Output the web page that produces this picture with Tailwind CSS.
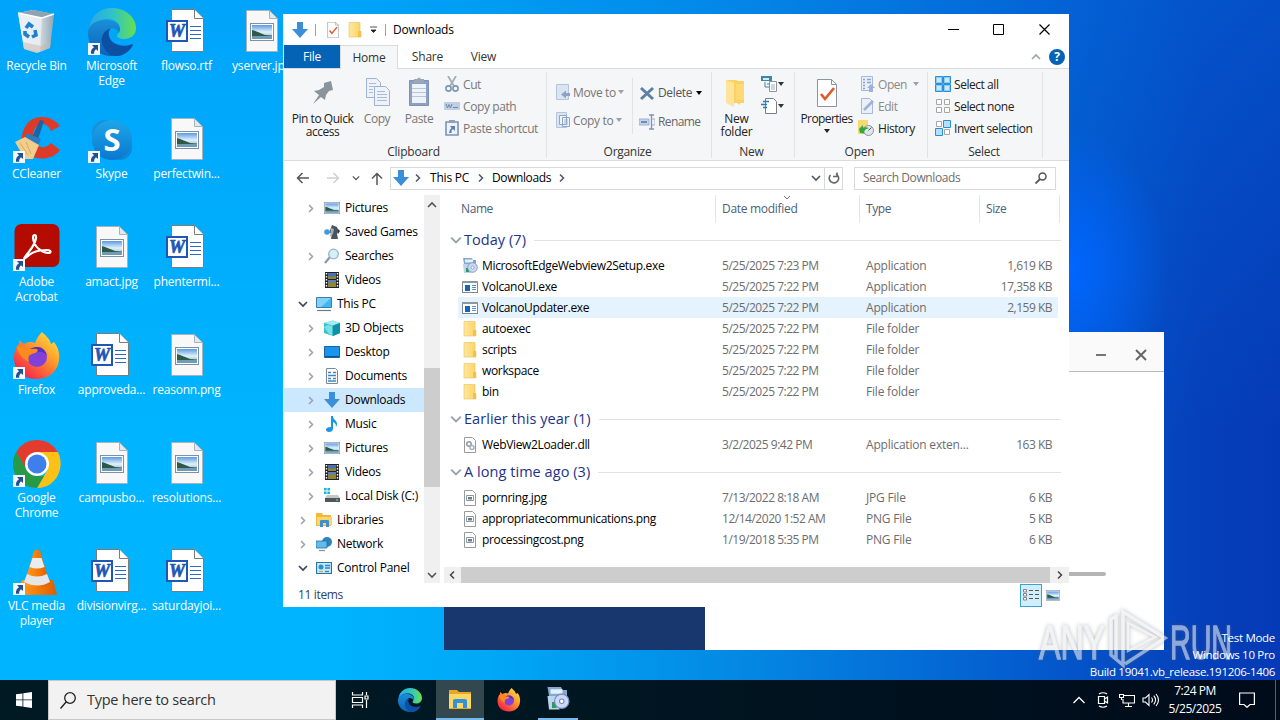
<!DOCTYPE html>
<html lang="en">

<head>
  <meta charset="UTF-8" />
  <meta name="viewport" content="width=device-width, initial-scale=1.0" />
  <title>Downloads</title>
  <script src="https://cdn.jsdelivr.net/npm/@tailwindcss/browser@4"></script>
</head>

<body class="relative w-[1280px] h-[720px] overflow-hidden bg-[#00b0ff] font-['Open_Sans','Noto_Sans',sans-serif] text-xs tracking-[-0.2px] text-black">

  <!-- Icon sprites -->
  <svg class="absolute w-0 h-0">
    <defs>
      <linearGradient id="gEdgeA" x1="0" y1="0" x2="1" y2="0"><stop offset="0" stop-color="#2aa7e8" /><stop offset=".5" stop-color="#2fc3c8" /><stop offset="1" stop-color="#66e04e" /></linearGradient>
      <linearGradient id="gEdgeB" x1="0" y1="0" x2="0" y2="1"><stop offset="0" stop-color="#1a8fd8" /><stop offset="1" stop-color="#0b62b8" /></linearGradient>
      <linearGradient id="gFox" x1="1" y1="0" x2="0.2" y2="1"><stop offset="0" stop-color="#fff04a" /><stop offset=".45" stop-color="#ff9a2a" /><stop offset="1" stop-color="#f5184f" /></linearGradient>
      <linearGradient id="gSkype" x1="0" y1="0" x2="0" y2="1"><stop offset="0" stop-color="#1ca6e8" /><stop offset="1" stop-color="#0a78d0" /></linearGradient>
      <linearGradient id="gCone" x1="0" y1="0" x2="1" y2="0"><stop offset="0" stop-color="#ffa22e" /><stop offset=".5" stop-color="#f57c0a" /><stop offset="1" stop-color="#d85f00" /></linearGradient>
      <linearGradient id="gPhoto" x1="0" y1="0" x2="0" y2="1"><stop offset="0" stop-color="#5b9be0" /><stop offset=".5" stop-color="#dff0fa" /><stop offset="1" stop-color="#7fb0cf" /></linearGradient>
      <linearGradient id="gBin" x1="0" y1="0" x2="1" y2="0"><stop offset="0" stop-color="#e4eef4" /><stop offset=".6" stop-color="#cfdbe3" /><stop offset="1" stop-color="#93a6b4" /></linearGradient>
      <linearGradient id="gFold" x1="0" y1="0" x2="1" y2="0"><stop offset="0" stop-color="#ffe79b" /><stop offset="1" stop-color="#fcd266" /></linearGradient>
    </defs>

    <symbol id="photo" viewBox="0 0 24 18">
      <rect x=".5" y=".5" width="23" height="17" fill="#fff" stroke="#7d8fa5" />
      <rect x="2" y="2" width="20" height="14" fill="url(#gPhoto)" />
      <path d="M2 7c4 1 8 3 13 5l7 .5V14H2z" fill="#2e5a45" />
      <path d="M2 13h20v3H2z" fill="#6d9bb8" />
    </symbol>
    <symbol id="image" viewBox="0 0 48 48">
      <path d="M8.500 2.500h23l8 8v33h-31z" fill="#f8f8f8" stroke="#a5b3bd" />
      <path d="M31.500 2.500v8h8z" fill="#e3e8ec" stroke="#a5b3bd" />
      <use href="#photo" x="12" y="15" width="24" height="18" />
    </symbol>
    <symbol id="word" viewBox="0 0 48 48">
      <path d="M8.500 1.500h23l9 9v33h-32z" fill="#fff" stroke="#7b7b7b" />
      <path d="M31.500 1.500v9h9" fill="#fff" stroke="#7b7b7b" />
      <path d="M27 18.500h11M27 22.500h11M27 26.500h11M27 30.500h11" stroke="#2b6cc4" stroke-width="1.200" />
      <rect x="4" y="13" width="20" height="20" fill="#fff" stroke="#1e57b5" stroke-width="2" />
      <text x="14" y="29" text-anchor="middle" font-family="Liberation Serif" font-weight="bold" font-style="italic" font-size="18" fill="#1e57b5" stroke="#1e57b5" stroke-width=".7">W</text>
    </symbol>
    <symbol id="shortcut" viewBox="0 0 12 12">
      <rect width="12" height="12" fill="#f4f7fb" />
      <path d="M4 2h6v6L8 6.300C6.500 7.500 6 9 6.200 10.800H3C2.600 8 3.600 6 6 4.300z" fill="#234f93" />
    </symbol>
    <symbol id="bin" viewBox="0 0 48 48">
      <path d="M5 5l15-3 21 4-4 34-13 5-13-4z" fill="url(#gBin)" />
      <path d="M5 5l15-3 21 4-12 4z" fill="#8fa3b1" />
      <path d="M5 5l24 5-2 34-16-4z" fill="#edf3f7" fill-opacity=".75" />
      <path d="M5 5l24 5 12-4" fill="none" stroke="#fff" stroke-width="1.400" />
      <path d="M10 34l18 4 10-5-1 7-13 5-13-4z" fill="#c8b7a8" fill-opacity=".5" />
      <g fill="none" stroke="#1f7fd2" stroke-width="3.600"><path d="M13 20l3-4 4 3" /><path d="M22 22l1 5-4 2" /><path d="M16 29l-4-3 0-3" /></g>
    </symbol>
    <symbol id="edge" viewBox="0 0 48 48">
      <path d="M1 22C2 8 12 0 24 0c14 0 24 10 24 20 0 7-5 11-12 11-4 0-7-2-7-3 0-2 3-3 3-8 0-5-6-9-13-9C10 11 3 16 1 22z" fill="url(#gEdgeA)" />
      <path d="M0 25c0-8 8-13 17-13 9 0 15 4 15 10l-1 3c-1-3-4-5-7-5-5 0-8 5-6 11 2 8 9 13 17 15-3 2-7 2-11 2C10 48 0 38 0 25z" fill="url(#gEdgeB)" />
      <path d="M21 21c-7 3-9 11-6 17 3 7 9 10 13 10 8 0 14-5 17-11 0-1-1-1-1-1-8 4-21 1-23-8-1-3 0-6 2-8z" fill="#0d4fa2" />
    </symbol>
    <symbol id="ccleaner" viewBox="0 0 48 48">
      <path d="M47 10C41 1 27-2 18 4 8 11 6 27 13 36c8 9 26 9 34-2l-9-7c-5 6-13 5-16 0-4-7-2-15 4-18 5-2 10 0 12 6z" fill="#dd3b27" />
      <path d="M27 4l4 1-6 18-6-2z" fill="#1f62a0" />
      <path d="M14 17l14 6-3 7-14-6z" fill="#2c7cc2" />
      <path d="M2 26l10-5 14 8-6 14-8 0z" fill="#f3cd8b" />
      <path d="M7 27l8 12M13 26l5 12" stroke="#d9a95c" fill="none" />
    </symbol>
    <symbol id="skype" viewBox="0 0 48 48">
      <circle cx="17" cy="17" r="13" fill="#1a8fdc" /><circle cx="32" cy="32" r="12" fill="#1088da" />
      <circle cx="24" cy="24" r="20" fill="url(#gSkype)" />
      <text x="24" y="35" text-anchor="middle" font-family="Open Sans" font-weight="bold" font-size="31" fill="#fff">S</text>
    </symbol>
    <symbol id="acrobat" viewBox="0 0 48 48">
      <rect x="1.500" y="0" width="45" height="43" rx="7" fill="#b30b00" />
      <path d="M12 33c4-6 10-11 11-19 .5-4-3-4-3 0 1 9 8 14 15 15 4 0 3-3-1-3-8 0-15 2-19 6-3 3-5 3-3 1z" fill="none" stroke="#fff" stroke-width="2.200" stroke-linejoin="round" />
    </symbol>
    <symbol id="firefox" viewBox="0 0 48 48">
      <path d="M29 0c4 4 8 7 9 12l3-2c4 5 6 11 5 18-1 11-10 19-22 19C11 47 1 39 1 26c0-6 2-11 5-14l0-4 5 4c5-3 9-2 11-1 2-5 4-8 7-11z" fill="url(#gFox)" />
      <circle cx="24" cy="25" r="10" fill="#8141d8" />
      <path d="M24 15c6 0 10 5 10 10 0-3-5-6-9-5-5 1-8-1-8-3 2-1 4-2 7-2z" fill="#5a2fc0" />
      <path d="M4 14c5 0 8 2 12 3 4 0 7-1 9 1-1 4-6 3-8 5-2 1-2 4-1 7-6-3-12-9-12-16z" fill="#ff8b1f" />
    </symbol>
    <symbol id="chrome" viewBox="0 0 48 48">
      <path d="M24 24L3.200 12A24 24 0 0 1 44.800 12z" fill="#e33b2e" />
      <path d="M24 12h20.800c5 9 4 24-8 32.500A24 24 0 0 1 24 48l10.500-18z" fill="#fbc116" />
      <path d="M13.500 30L3.200 12 24 12z" fill="#e33b2e" />
      <path d="M3.200 12l10.500 18L24 36l7 0-7 12A24 24 0 0 1 3.200 12z" fill="#269a45" />
      <circle cx="24" cy="24" r="12" fill="#fff" /><circle cx="24" cy="24" r="9.500" fill="#3f7fec" />
    </symbol>
    <symbol id="vlc" viewBox="0 0 48 48">
      <path d="M9 32h31l4 15H4z" fill="url(#gCone)" />
      <path d="M21 3q3-3 6 0l10 33q-12 9-26 0z" fill="url(#gCone)" />
      <path d="M19.500 10h9l3 9q-7.500 3-15 0z" fill="#ececec" /><path d="M14 26q10 5 20 0l3 8q-12 7-26 0z" fill="#e6e6e6" />
    </symbol>
    <symbol id="folder" viewBox="0 0 16 16">
      <path d="M2 1h11v12H2z" fill="url(#gFold)" /><path d="M2 .5h11v9h1V15H2z" fill="url(#gFold)" stroke="#e9c15a" stroke-width=".6" />
      <path d="M11 9v6h3V9z" fill="#f3c04c" />
    </symbol>
    <symbol id="explorer" viewBox="0 0 24 24">
      <path d="M1 3h8l2 2h12v17H1z" fill="#e8a724" /><path d="M1 7h22v14H1z" fill="#fdd663" />
      <path d="M5 21v-7q0-2 2-2h10q2 0 2 2v7h-4v-5H9v5z" fill="#2e92dd" />
    </symbol>
    <symbol id="down" viewBox="0 0 16 16"><path d="M5 0h6v7h5l-8 9-8-9h5z" fill="#3b8fd8" /></symbol>
    <symbol id="check" viewBox="0 0 20 28">
      <path d="M.5.500h14l5 5v22H.5z" fill="#fff" stroke="#8d949c" /><path d="M14.500.500v5h5" fill="none" stroke="#8d949c" />
      <path d="M4 15l4 5 9-11" fill="none" stroke="#dd5a2b" stroke-width="2.600" />
    </symbol>
    <symbol id="setup" viewBox="0 0 16 16">
      <path d="M1 0h9l1 2h3v4H2z" fill="#86a8d0" /><path d="M3 1.500h8v3H3z" fill="#e2f2fa" />
      <path d="M1 6h8v9H2z" fill="#bfd3ea" /><path d="M4 10h3v4H4z" fill="#2c9c5a" />
      <circle cx="10.500" cy="9.500" r="4.800" fill="#cfd8f2" stroke="#6f8cc4" stroke-width=".8" /><circle cx="10.500" cy="9.500" r="1.500" fill="#fff" stroke="#6f88bb" stroke-width=".7" />
    </symbol>
    <symbol id="exe" viewBox="0 0 16 16">
      <rect x=".5" y="2.500" width="15" height="11" fill="#fff" stroke="#7e8890" /><path d="M0 2h16v2H0z" fill="#8e979e" />
      <path d="M3 6h5v6H3z" fill="#1467b5" /><path d="M10 6.500h4M10 8.500h4M10 10.500h4" stroke="#5f8fbd" />
    </symbol>
    <symbol id="dll" viewBox="0 0 16 16">
      <path d="M2.500.500h8l3 3v12h-11z" fill="#fff" stroke="#9a9a9a" />
      <circle cx="7" cy="7" r="2.200" fill="none" stroke="#8b97a3" stroke-width="1.500" /><circle cx="10" cy="10.500" r="2" fill="none" stroke="#a5b3bf" stroke-width="1.500" />
    </symbol>
    <symbol id="pic" viewBox="0 0 16 16">
      <path d="M2.500.500h8l3 3v12h-11z" fill="#fff" stroke="#9a9a9a" /><path d="M4.500 5.500h7v5h-7z" fill="#fff" stroke="#8b97a3" /><path d="M6 7h4v2.500H6z" fill="#5f7f98" />
    </symbol>
    <symbol id="games" viewBox="0 0 16 16">
      <path d="M8 1l5 2 1 5-1 2 1 5H7l1-6-3 0z" fill="#4a545c" /><path d="M7 4l3 1-1 5-3 3z" fill="#9fb0bc" />
      <circle cx="3" cy="8" r="2.800" fill="#3d9be0" /><path d="M13 4l3 3-2 3z" fill="#333" />
    </symbol>
    <symbol id="lens" viewBox="0 0 16 16"><path d="M1 15l5-6" stroke="#8a98a5" stroke-width="2.200" /><circle cx="9.500" cy="6" r="4.800" fill="#d5effb" stroke="#9cb4c4" stroke-width="1.300" /></symbol>
    <symbol id="video" viewBox="0 0 16 16">
      <path d="M1 0h14v16H1z" fill="#222" /><path d="M4 1h8v6H4z" fill="#4a6fb5" /><path d="M4 8h8v7H4z" fill="#6b7bb0" />
      <path d="M4 4l4 1 4-1v3H4zM4 12l5-2 3 2v3H4z" fill="#8c8a2d" />
      <path d="M2.500 1v15M13.500 1v15" stroke="#fff" stroke-width="1.400" stroke-dasharray="1.500 1.500" />
    </symbol>
    <symbol id="pc" viewBox="0 0 16 16"><path d="M.5 1.500h15v10H.5z" fill="#3fb7f3" stroke="#3b7ea8" /><path d="M1 2h14L5 11H1z" fill="#7fd3fa" /><path d="M1 14.500h14" stroke="#6d7b85" stroke-width="1.200" /></symbol>
    <symbol id="cube" viewBox="0 0 16 16"><path d="M0 3l9-2.500L16 3v10l-7 3-9-3z" fill="#35c3d0" /><path d="M0 3l9-2.500L16 3 9 5.500z" fill="#a5ecf0" /><path d="M9 5.500L16 3v10l-7 3z" fill="#1090a8" /><path d="M0 7l4-2 4 1v9l-3-1z" fill="#7fdde4" /></symbol>
    <symbol id="desk" viewBox="0 0 16 16"><path d="M.5 2.500h15v11H.5z" fill="#1b94ee" stroke="#1466a8" /><path d="M1 12.500h14" stroke="#0b548f" /></symbol>
    <symbol id="doc" viewBox="0 0 16 16"><path d="M2.500.500h9l2 2v13h-11z" fill="#fff" stroke="#7d8a95" /><path d="M4 4.500h3M9 4.500h3M4 7.500h8M4 10.500h3M9 10.500h3M4 13h8" stroke="#3f87bf" stroke-width="1.300" /></symbol>
    <symbol id="music" viewBox="0 0 16 16"><path d="M7 0h2c0 4 4 4 4 8 0 1-.5 2-1 3 0-3-1-4-3-5v7c0 2-2 3-4 3s-3-1-3-2.500S4 11 7 11z" fill="#1c93e3" /></symbol>
    <symbol id="disk" viewBox="0 0 16 16"><path d="M0 0h2.600v2.600H0zM3.400 0H6v2.600H3.400zM0 3.400h2.600V6H0zM3.400 3.400H6V6H3.400z" fill="#1db7dd" /><path d="M3 7h11l2 3H1z" fill="#c4c8ca" /><path d="M1 10h15v4H1z" fill="#50565a" /><path d="M12 12h2" stroke="#6f6" /></symbol>
    <symbol id="libs" viewBox="0 0 16 16"><path d="M0 1h6l1 2h8v11H0z" fill="#f0b93a" /><path d="M1 5h15v8H1z" fill="#fdd667" /><path d="M4 15V9q0-1 1-1h7q1 0 1 1v6h-3v-4H7v4z" fill="#3e8fd1" /></symbol>
    <symbol id="net" viewBox="0 0 16 16"><circle cx="11" cy="6" r="5" fill="#2d83bd" /><path d="M0 5h11v7H0z" fill="#5fbdec" stroke="#286e9d" stroke-width=".8" /><path d="M3 14.500h6" stroke="#7d97a8" stroke-width="1.300" /></symbol>
    <symbol id="panel" viewBox="0 0 16 16"><path d="M.5 2.500h15v11H.5z" fill="#c8e9fa" stroke="#2377aa" stroke-width="1.200" /><circle cx="5" cy="7" r="2.500" fill="#2490d5" /><path d="M9 5.500h5M9 8h5" stroke="#2887c6" stroke-width="1.300" /><path d="M3 11.500h4" stroke="#e2a827" stroke-width="1.300" /><path d="M9 11.500h4" stroke="#2887c6" stroke-width="1.300" /></symbol>
    <symbol id="npics" viewBox="0 0 16 16"><use href="#photo" x="0" y="2" width="16" height="12" /></symbol>

    <!-- ribbon icons -->
    <symbol id="pin" viewBox="0 0 32 32"><path d="M17 7l7-2 2 9-4 1-3 4-1 5-4-3-8 7 6-9-5-4 5-1 5-3z" fill="#8a949b" /></symbol>
    <symbol id="copy" viewBox="0 0 32 32">
      <g fill="#eef3fb" stroke="#9fb2d1"><path d="M5.500 2.500h10l4 4v15h-14z" /><path d="M13.500 10.500h11l4 4v15h-15z" /></g>
      <path d="M8 7.500h7M8 10.500h5M8 13.500h4M8 16.500h4M16 15.500h8M16 18.500h10M16 21.500h10M16 24.500h10" stroke="#a9bbd8" />
    </symbol>
    <symbol id="paste" viewBox="0 0 32 32"><path d="M6.500 4.500h19v25h-19z" fill="#8da0bf" stroke="#7e92b3" /><path d="M9 8h14v19H9z" fill="#eef3fb" /><path d="M11 3h3q2-3 4 0h3v4H11z" fill="#9aa7b8" /><path d="M9 12.500h14M9 16.500h14M9 20.500h14" stroke="#b8c6dd" /></symbol>
    <symbol id="cut" viewBox="0 0 16 16"><path d="M4 0l6 10M12 0L6 10" stroke="#a3adb8" stroke-width="1.800" /><circle cx="4.500" cy="12.500" r="2.600" fill="none" stroke="#7f95b5" stroke-width="1.600" /><circle cx="11.500" cy="12.500" r="2.600" fill="none" stroke="#7f95b5" stroke-width="1.600" /></symbol>
    <symbol id="path" viewBox="0 0 16 16"><path d="M0 4h16v8H0z" fill="#c0cfe4" /><path d="M2 6l1.500 4L5 6.500 6.500 10 8 6M9 9.500h5" fill="none" stroke="#6f87ad" /></symbol>
    <symbol id="pshort" viewBox="0 0 16 16"><path d="M2 2h12v13H2z" fill="#eef3fb" stroke="#7e92b3" stroke-width="1.600" /><path d="M5 0h6v3H5z" fill="#8fa0b5" /><path d="M6 6h5v5L9 9q-2 1-1.500 4H5q0-3 2.500-5z" fill="#5d7fb8" /></symbol>
    <symbol id="move" viewBox="0 0 16 16"><path d="M1.500.500h12v15h-12z" fill="#dbe4f1" stroke="#b5c4dc" /><path d="M15 9v3h-4v2.500L6 10.500l5-4V9z" fill="#8ba3c8" /></symbol>
    <symbol id="copyto" viewBox="0 0 16 16"><path d="M1.500.500h10v15h-10z" fill="#dbe4f1" stroke="#b5c4dc" /><path d="M4.500 3.500h7v9h-7zM7.500 5.500h7v9h-7z" fill="#eef3fb" stroke="#8fa5c8" /><path d="M9 8h4M9 10h4M9 12h4" stroke="#9db1d0" /></symbol>
    <symbol id="del" viewBox="0 0 16 16"><path d="M2 3l12 11M14 3L2 14" stroke="#5f7ea3" stroke-width="3" /></symbol>
    <symbol id="rename" viewBox="0 0 16 16"><path d="M0 5h10v6H0z" fill="#c5d3e8" stroke="#9fb2d1" /><path d="M2 7h6v2H2z" fill="#6d8bbd" /><path d="M12.500 1.500v13M10 1h5M10 15h5" stroke="#7e92b3" stroke-width="1.300" /><path d="M13 5h3v6h-3" fill="none" stroke="#9fb2d1" /></symbol>
    <symbol id="newfolder" viewBox="0 0 32 32"><path d="M5 4h10l2 1h6v22h-4v2l-3-2H5z" fill="#fbd161" /><path d="M5 4l8 3v24l-8-4z" fill="#fde49a" /><path d="M15 8h8v16h-8z" fill="#ffda74" /></symbol>
    <symbol id="newitem" viewBox="0 0 16 16"><path d="M0 0h11v5H0z" fill="#3f87a8" /><path d="M2 2h6v2H2z" fill="#d3edf7" /><path d="M4 6v5h4M6 8h4" fill="none" stroke="#3f87a8" /><path d="M8.500 5.500h7v10h-7z" fill="#fff" stroke="#8b949c" /><path d="M10 9h4M10 11h4M10 13h4" stroke="#a5adb5" /></symbol>
    <symbol id="easy" viewBox="0 0 16 16"><path d="M4.500.500h8l3 3v12h-11z" fill="#fff" stroke="#7a7f85" /><path d="M2 3.500h6M0 6.500h6M2 9.500h4" stroke="#2b7ab8" stroke-width="1.300" /></symbol>
    <symbol id="open" viewBox="0 0 16 16"><path d="M2.500.500h11v14h-11z" fill="#e8eefa" stroke="#a7b8dd" /><path d="M4 3.500h2M8 3.500h4M4 6.500h2M8 6.500h4M4 9.500h2M4 12.500h2" stroke="#8ea4cf" stroke-width="1.400" /><path d="M12 8l4 4h-2v4h-4v-4H8z" fill="#9fb1d6" /></symbol>
    <symbol id="edit" viewBox="0 0 16 16"><path d="M2.500.500h8l3 3v12h-11z" fill="#eaf0fa" stroke="#a7b8dd" /><path d="M5 12L14 3" stroke="#a0b1d2" stroke-width="2.600" /></symbol>
    <symbol id="history" viewBox="0 0 16 16"><path d="M0 0h10v14H0z" fill="#fbd86d" /><circle cx="10.500" cy="10.500" r="5" fill="#dfe6ea" stroke="#87929a" /><path d="M10.500 10.500l3-3" stroke="#555" /><path d="M1 9l4-4v2.500q4-1 6 1-5 0-5 5L2 13z" fill="#2fa843" /></symbol>
    <symbol id="selall" viewBox="0 0 16 16"><g fill="#8ccbf5" stroke="#2b8fd8"><path d="M.5.500h7v7h-7zM8.500.500h7v7h-7zM.5 8.500h7v7h-7zM8.500 8.500h7v7h-7z" /></g><path d="M2 2h4v4H2zM10 2h4v4h-4zM2 10h4v4H2zM10 10h4v4h-4z" fill="#c9e8fc" /></symbol>
    <symbol id="selnone" viewBox="0 0 16 16"><path d="M1.500 1.500h5v5h-5zM9.500 1.500h5v5h-5zM1.500 9.500h5v5h-5zM9.500 9.500h5v5h-5z" fill="#fff" stroke="#a6a6a6" /></symbol>
    <symbol id="selinv" viewBox="0 0 16 16"><path d="M1.500 1.500h5v5h-5zM9.500 9.500h5v5h-5z" fill="#fff" stroke="#a6a6a6" /><path d="M8.500.500h7v7h-7zM.5 8.500h7v7h-7z" fill="#b9defa" stroke="#2b8fd8" /></symbol>
    <symbol id="tri" viewBox="0 0 6 4"><path d="M0 0h6L3 4z" fill="currentColor" /></symbol>
    <symbol id="chevR" viewBox="0 0 8 8"><path d="M2 0.500L5.500 4 2 7.500" fill="none" stroke="currentColor" stroke-width="1.500" /></symbol>
    <symbol id="chevD" viewBox="0 0 10 8"><path d="M1 2l4 4 4-4" fill="none" stroke="currentColor" stroke-width="1.600" /></symbol>
  </svg>

  <!-- Wallpaper -->
  <div class="absolute inset-0 bg-[linear-gradient(90deg,#00b4ff_0%,#00b4ff_26%,#00a8f6_38%,#0488e4_58%,#0458cc_82%,#053fba_94%,#053ab6_100%)]"></div>
  <div class="absolute inset-0 bg-[linear-gradient(180deg,#0080ee4d_0%,#0080ee00_60%)]"></div>
  <div class="absolute left-[1069px] top-0 w-[211px] h-full bg-[radial-gradient(ellipse_100px_140px_at_0px_270px,#0066ff_0%,#0064fb00_100%)]"></div>

  <!-- Desktop shortcuts -->
  <div id="desktop" class="absolute left-0 top-2 grid grid-flow-col grid-rows-[repeat(6,108px)] auto-cols-[75px] text-white"></div>

  <!-- Window behind -->
  <div class="absolute left-[444px] top-[332px] w-[720px] h-[318px] bg-white flex flex-col">
    <div class="h-10 bg-[#fafafa] border-b border-[#b9b9b9] flex items-center justify-end pt-1.5 pr-[17px] gap-[28px] text-[#666]">
      <svg class="w-3 h-3" viewBox="0 0 12 12"><path d="M1 6h10" stroke="currentColor" stroke-width="1.800" /></svg>
      <svg class="w-3 h-3" viewBox="0 0 12 12"><path d="M1 1l10 10M11 1L1 11" stroke="currentColor" stroke-width="2" /></svg>
    </div>
    <div class="flex-1 flex">
      <div class="w-[261px] bg-[#17376e]"></div>
      <div class="flex-1 pt-[200px] pr-[58px]">
        <div class="h-1 bg-[#b5b5b5] rounded-full"></div>
      </div>
    </div>
  </div>

  <!-- Explorer -->
  <main class="absolute left-[283px] top-[14px] w-[786px] h-[593px] bg-white border-l border-[#d9f1fc] flex flex-col">

    <!-- Title bar -->
    <div class="h-[31px] flex items-center pl-2 shrink-0">
      <svg class="w-4 h-4"><use href="#down" /></svg>
      <span class="w-px h-3 bg-gray-400 ml-[7px] mr-[11px]"></span>
      <svg class="w-3 h-4"><use href="#check" /></svg>
      <svg class="w-4 h-4 ml-2"><use href="#folder" /></svg>
      <svg class="w-[9px] h-2 ml-[6px]" viewBox="0 0 9 8"><path d="M1 1h7M2 4h5L4.500 6.500z" stroke="#222" stroke-width=".8" fill="#222" /></svg>
      <span class="w-px h-3 bg-gray-400 ml-[7px] mr-[7px]"></span>
      <span>Downloads</span>
      <div class="ml-auto flex items-center gap-[34px] pr-[19px]">
        <svg class="w-[11px] h-[11px]" viewBox="0 0 11 11"><path d="M0 5.500h11" stroke="#000" /></svg>
        <svg class="w-[11px] h-[11px]" viewBox="0 0 11 11"><path d="M.5.500h10v10H.5z" stroke="#000" fill="none" /></svg>
        <svg class="w-[11px] h-[11px] ml-px" viewBox="0 0 11 11"><path d="M.5.500l10 10M10.500.500l-10 10" stroke="#000" stroke-width="1.200" /></svg>
      </div>
    </div>

    <!-- Tabs -->
    <div class="h-[24px] flex shrink-0 border-b border-[#dadbdc] text-[#333]">
      <div class="w-14 bg-[#0563b5] text-white flex items-center justify-center">File</div>
      <div class="w-[58px] h-[24px] bg-[#f5f6f7] border-x border-t border-[#dadbdc] flex items-center justify-center">Home</div>
      <div class="w-[59px] flex items-center justify-center">Share</div>
      <div class="w-[53px] flex items-center justify-center">View</div>
      <div class="ml-auto flex items-center gap-2 pr-1">
        <svg class="w-[10px] h-2 rotate-180 text-gray-400"><use href="#chevD" /></svg>
        <div class="w-4 h-4 rounded-full bg-[#0563b5] text-white font-bold flex items-center justify-center">?</div>
      </div>
    </div>

    <!-- Ribbon -->
    <div class="h-[92px] flex shrink-0 bg-[#f5f6f7] border-b border-[#dadbdc] text-[#333] leading-[13px] tracking-[-0.450px] pt-[3px] pb-[2px]">
      <section class="w-[263px] border-r border-[#e2e3e4] flex flex-col">
        <div class="flex h-[70px] pt-1">
          <div class="w-[77px] flex flex-col items-center text-center text-[#222]"><svg class="w-8 h-8 mb-1"><use href="#pin" /></svg>Pin to Quick<br />access</div>
          <div class="w-8 flex flex-col items-center text-[#777]"><svg class="w-8 h-8 mb-1"><use href="#copy" /></svg>Copy</div>
          <div class="w-[52px] flex flex-col items-center text-[#777]"><svg class="w-8 h-8 mb-1"><use href="#paste" /></svg>Paste</div>
          <div class="flex flex-col -mt-[3px] tracking-[-0.400px] text-[#777]">
            <div class="h-[22px] flex items-center gap-[3px]"><svg class="w-4 h-4 -ml-px"><use href="#cut" /></svg>Cut</div>
            <div class="h-[22px] flex items-center gap-[3px]"><svg class="w-4 h-4 -ml-px"><use href="#path" /></svg>Copy path</div>
            <div class="h-[22px] flex items-center gap-[3px]"><svg class="w-4 h-4 -ml-px"><use href="#pshort" /></svg>Paste shortcut</div>
          </div>
        </div>
        <div class="text-center pt-[3px] pr-[3px] tracking-[-0.200px]">Clipboard</div>
      </section>
      <section class="w-[165px] border-r border-[#e2e3e4] flex flex-col">
        <div class="flex h-[70px] pt-[6px] tracking-[-0.350px]">
          <div class="w-[86px] h-[56px] border-r border-[#e2e3e4] pl-2 flex flex-col text-[#777]">
            <div class="h-[29px] flex items-center"><svg class="w-4 h-4 mr-[2px]"><use href="#move" /></svg>Move to<svg class="w-[6px] h-1 ml-auto mr-2 text-gray-400"><use href="#tri" /></svg></div>
            <div class="h-[29px] flex items-center"><svg class="w-4 h-4 mr-[2px]"><use href="#copyto" /></svg>Copy to<svg class="w-[6px] h-1 ml-auto mr-[10px] text-gray-400"><use href="#tri" /></svg></div>
          </div>
          <div class="pl-[6px] flex flex-col text-[#555]">
            <div class="h-[29px] flex items-center"><svg class="w-4 h-4 mr-[3px]"><use href="#del" /></svg>Delete<svg class="w-[6px] h-1 ml-1 text-black"><use href="#tri" /></svg></div>
            <div class="h-[29px] flex items-center tracking-[-0.600px] text-[#666]"><svg class="w-4 h-4 mr-[3px]"><use href="#rename" /></svg>Rename</div>
          </div>
        </div>
        <div class="text-center pt-[3px] pr-[3px] tracking-[-0.300px]">Organize</div>
      </section>
      <section class="w-[83px] border-r border-[#e2e3e4] flex flex-col">
        <div class="flex h-[70px] pt-1">
          <div class="w-[49px] flex flex-col items-center text-center tracking-[-0.250px] text-[#222]"><svg class="w-8 h-8 mb-1"><use href="#newfolder" /></svg>New<br />folder</div>
          <div class="flex flex-col -mt-[3px]">
            <div class="h-[22px] flex items-center gap-[1px]"><svg class="w-4 h-4"><use href="#newitem" /></svg><svg class="w-[6px] h-1"><use href="#tri" /></svg></div>
            <div class="h-[22px] flex items-center gap-[1px]"><svg class="w-4 h-4"><use href="#easy" /></svg><svg class="w-[6px] h-1"><use href="#tri" /></svg></div>
          </div>
        </div>
        <div class="text-center pt-[3px] pr-[3px] tracking-[-0.200px]">New</div>
      </section>
      <section class="w-[133px] border-r border-[#e2e3e4] flex flex-col">
        <div class="flex h-[70px] pt-1">
          <div class="w-[63px] flex flex-col items-center text-[#222]"><svg class="w-5 h-[30px] mt-[2px] mb-1"><use href="#check" /></svg><span class="tracking-[-0.600px]">Properties</span><svg class="w-[6px] h-1 mt-1"><use href="#tri" /></svg></div>
          <div class="flex flex-col -mt-[3px] text-[#222]">
            <div class="h-[22px] flex items-center text-[#8a8a8a]"><svg class="w-4 h-4 ml-px mr-[3px]"><use href="#open" /></svg>Open<svg class="w-[6px] h-1 ml-[6px] text-gray-400"><use href="#tri" /></svg></div>
            <div class="h-[22px] flex items-center text-[#8a8a8a]"><svg class="w-4 h-4 ml-px mr-[3px]"><use href="#edit" /></svg>Edit</div>
            <div class="h-[22px] flex items-center"><svg class="w-4 h-4 mr-1"><use href="#history" /></svg>History</div>
          </div>
        </div>
        <div class="text-center pt-[3px] pr-[3px] tracking-[-0.200px]">Open</div>
      </section>
      <section class="w-[115px] border-r border-[#e2e3e4] flex flex-col">
        <div class="flex flex-col h-[70px] pt-px pl-[7px] text-[#222]">
          <div class="h-[22px] flex items-center gap-[3px]"><svg class="w-4 h-4"><use href="#selall" /></svg>Select all</div>
          <div class="h-[22px] flex items-center gap-[3px]"><svg class="w-4 h-4"><use href="#selnone" /></svg>Select none</div>
          <div class="h-[22px] flex items-center gap-[3px]"><svg class="w-4 h-4"><use href="#selinv" /></svg>Invert selection</div>
        </div>
        <div class="text-center pt-[3px] pr-[2px] tracking-[-0.300px]">Select</div>
      </section>
    </div>

    <!-- Address bar -->
    <div class="h-[34px] flex items-center shrink-0 pl-3 text-[#555]">
      <svg class="w-[14px] h-3" viewBox="0 0 14 12"><path d="M13 6H2M6.500 1L1.500 6l5 5" fill="none" stroke="#555" stroke-width="1.500" /></svg>
      <svg class="w-[14px] h-3 ml-4" viewBox="0 0 14 12"><path d="M1 6h11M7.500 1l5 5-5 5" fill="none" stroke="#d0d0d0" stroke-width="1.500" /></svg>
      <svg class="w-2 h-2 ml-3"><use href="#chevD" /></svg>
      <svg class="w-3 h-[13px] ml-[11px]" viewBox="0 0 12 13"><path d="M6 13V2M1 6.500L6 1.500l5 5" fill="none" stroke="#555" stroke-width="1.500" /></svg>
      <div class="w-[453px] h-[23px] border border-[#d9d9d9] ml-[7px] flex items-center text-black">
        <svg class="w-4 h-4 ml-[2px]"><use href="#down" /></svg>
        <svg class="w-2 h-2 ml-[5px] text-gray-600"><use href="#chevR" /></svg>
        <span class="w-[38px] ml-2">This&nbsp;PC</span>
        <svg class="w-2 h-2 ml-[9px] text-gray-600"><use href="#chevR" /></svg>
        <span class="w-[59px] ml-[7px] tracking-[-0.400px]">Downloads</span>
        <svg class="w-2 h-2 ml-[7px] text-gray-600"><use href="#chevR" /></svg>
        <svg class="w-[10px] h-2 ml-auto mr-[3px] text-gray-600"><use href="#chevD" /></svg>
        <div class="h-full w-[18px] border-l border-[#d9d9d9] flex items-center justify-center">
          <svg class="w-3 h-3" viewBox="0 0 12 12"><path d="M2.500 3A4.700 4.700 0 1 0 8 2M9 .5v4H5" fill="none" stroke="#666" stroke-width="1.600" /></svg>
        </div>
      </div>
      <div class="w-[202px] h-[23px] border border-[#d9d9d9] ml-[11px] pl-2 pr-2 flex items-center justify-between tracking-[-0.400px] text-[#6d6d6d]">
        Search Downloads
        <svg class="w-3 h-3" viewBox="0 0 12 12"><circle cx="7.500" cy="4.500" r="3.500" fill="none" stroke="#555" stroke-width="1.500" /><path d="M5 7l-4.500 4.500" stroke="#555" stroke-width="1.800" /></svg>
      </div>
    </div>

    <!-- Body -->
    <div class="flex h-[388px] shrink-0 overflow-hidden">
      <nav id="tree" class="w-[140px] pt-px"></nav>
      <div class="w-4 bg-[#f0f0f0] flex flex-col items-center justify-between pt-[6px] pb-1 text-[#555] relative">
        <svg class="w-[10px] h-2 rotate-180"><use href="#chevD" /></svg>
        <div class="absolute top-[173px] w-full h-[119px] bg-[#cdcdcd]"></div>
        <svg class="w-[10px] h-2"><use href="#chevD" /></svg>
      </div>
      <div class="flex-1 flex flex-col">
        <div class="h-[28px] flex items-center pl-5 text-[#4c607a] relative">
          <div class="w-[256px] h-7 pl-px leading-7 border-r border-[#e5e5e5] tracking-[-0.400px]">Name</div>
          <div class="w-[144px] h-7 pl-[6px] leading-7 border-r border-[#e5e5e5] tracking-[-0.300px]">Date modified</div>
          <div class="w-[120px] h-7 pl-[6px] leading-7 border-r border-[#e5e5e5] tracking-[-0.400px]">Type</div>
          <div class="w-[80px] h-7 pl-[6px] leading-7 border-r border-[#e5e5e5] tracking-[-0.400px]">Size</div>
          <svg class="absolute left-[343px] top-0 w-2 h-[6px]" viewBox="0 0 8 6"><path d="M1 1l3 3 3-3" fill="none" stroke="#777" /></svg>
        </div>
        <div id="files" class="flex-1"></div>
        <div class="h-4 ml-1 bg-[#f0f0f0] flex items-center justify-between text-[#444]">
          <svg class="w-2 h-[10px] mx-1 rotate-180"><use href="#chevR" /></svg>
          <div class="w-[589px] h-full bg-[#cdcdcd]"></div>
          <svg class="w-2 h-[10px] ml-[5px] mr-[5px]"><use href="#chevR" /></svg>
        </div>
      </div>
    </div>

    <!-- Status bar -->
    <div class="h-6 flex items-center pl-[14px] pr-[9px] text-[#2d3f66] tracking-[-0.350px]">
      11 items
      <div class="ml-auto w-[22px] h-[23px] border border-[#3fa0cc] bg-[#cdeefa] flex items-center justify-center">
        <svg class="w-4 h-3" viewBox="0 0 16 12"><path d="M.5.500h3v2.500h-3zM.5 4.500h3V7h-3zM.5 8.500h3V11h-3z" fill="#fff" stroke="#8a7f8a" /><path d="M6 1.500h4M12 1.500h4M6 5.500h4M12 5.500h4M6 9.500h4M12 9.500h4" stroke="#555" /></svg>
      </div>
      <svg class="w-[14px] h-[11px] ml-1"><use href="#photo" /></svg>
    </div>
  </main>

  <!-- Watermark -->
  <svg class="absolute left-[1036px] top-[606px] w-[200px] h-[66px] opacity-60 drop-shadow-[0_0_2px_rgba(90,90,90,0.7)]" viewBox="0 0 200 66">
    <g font-family="Liberation Sans" font-size="49" fill="#e9edf2" stroke="#e9edf2" stroke-width="1.300">
      <text x="3" y="53" textLength="66" lengthAdjust="spacingAndGlyphs">ANY</text>
      <text x="134" y="53" textLength="62" lengthAdjust="spacingAndGlyphs">RUN</text>
    </g>
    <path d="M80 53V10l-5 3v36l12 10V6l42 26-40 26" fill="none" stroke="#e9edf2" stroke-width="3.500" />
    <path d="M92 17v28l27-14z" fill="none" stroke="#e9edf2" stroke-width="2.500" />
  </svg>
  <div class="absolute right-[5px] top-[629px] text-right text-white leading-[17px] text-[11.500px] tracking-[-0.300px]">Test Mode<br />Windows 10 Pro<br />Build 19041.vb_release.191206-1406</div>

  <!-- Taskbar -->
  <footer class="absolute left-0 bottom-0 w-full h-10 bg-[linear-gradient(90deg,#001a24_0%,#001722_45%,#000b1a_100%)] flex items-center text-white">
    <div class="w-12 flex justify-center"><svg class="w-4 h-4" viewBox="0 0 16 16"><path d="M0 2.300l6.500-.9v6.100H0zM7.300 1.300L16 0v7.500H7.300zM0 8.300h6.500v6.200L0 13.700zM7.300 8.300H16V16l-8.700-1.300z" fill="#fff" /></svg></div>
    <div class="w-72 h-10 bg-[#f2f2f2] border border-[#c8c8c8] flex items-center text-[#333] text-[14.500px] tracking-[-0.250px]">
      <svg class="w-4 h-[17px] ml-[11px] mr-[11px]" viewBox="0 0 16 17"><circle cx="10" cy="6" r="5.300" fill="none" stroke="#222" stroke-width="1.300" /><path d="M6.300 9.800L.5 16.500" stroke="#222" stroke-width="1.400" /></svg>
      Type here to search
    </div>
    <div class="w-12 flex justify-center"><svg class="w-[18px] h-[16px]" viewBox="0 0 18 16"><path d="M1.500 0v3h10V0M1.500 5.500h10v5h-10zM1.500 16v-3h10v3M15.500 0v3M15.500 8v8M14 4h3v3h-3z" fill="none" stroke="#fff" stroke-width="1.200" /></svg></div>
    <div class="w-[52px] flex justify-center"><svg class="w-6 h-6"><use href="#edge" /></svg></div>
    <div class="w-12 h-10 bg-[#33474f] border-b-2 border-[#76b9ed] flex justify-center items-center"><svg class="w-6 h-6"><use href="#explorer" /></svg></div>
    <div class="w-[49px] flex justify-center"><svg class="w-6 h-6"><use href="#firefox" /></svg></div>
    <div class="w-[40px] h-10 ml-[5px] border-b-2 border-[#76b9ed] flex justify-center items-center"><svg class="w-6 h-6"><use href="#setup" /></svg></div>
    <div class="ml-auto flex items-center">
      <svg class="w-3 h-3" viewBox="0 0 12 12"><path d="M.5 9L6 3.500 11.500 9" fill="none" stroke="#fff" stroke-width="1.300" /></svg>
      <svg class="w-3 h-4 ml-3" viewBox="0 0 12 16"><path d="M1.500 4.500h6v7h-6zM7.500 7l3-2v6l-3-2M2 2q4-2.500 8 0M2 14q4 2.500 8 0" fill="none" stroke="#fff" stroke-width="1.200" /></svg>
      <svg class="w-4 h-4 ml-[10px]" viewBox="0 0 16 16"><path d="M5 3.500h10.500v7.500H4V7M.5 2.500h4v3h-4zM2.500 5.500V8M9.500 11v3M6 14.500h7" fill="none" stroke="#fff" stroke-width="1.100" /></svg>
      <svg class="w-[18px] h-4 ml-[7px]" viewBox="0 0 18 16"><path d="M1 6h2.500L7 2.500v11L3.500 10H1zM9.500 5.500q2 2.500 0 5M11.800 3.700q3.500 4.300 0 8.600M14 2q5 6 0 12" fill="none" stroke="#fff" stroke-width="1.100" /></svg>
      <div class="w-[70px] text-center leading-[18px] tracking-[-0.450px]">7:24 PM<br />5/25/2025</div>
      <svg class="w-4 h-4 ml-[9px]" viewBox="0 0 16 16"><path d="M.6 1h14.800v11.500H11L8 15.300 5 12.500H.6z" fill="none" stroke="#fff" stroke-width="1.200" /></svg>
      <div class="w-px h-10 bg-[#55606a] ml-5 mr-[4px]"></div>
    </div>
  </footer>

  <script>
    const shortcuts = [
      ["bin", "Recycle Bin"], ["ccleaner", "CCleaner", 1], ["acrobat", "Adobe<br>Acrobat", 1],
      ["firefox", "Firefox", 1], ["chrome", "Google<br>Chrome", 1], ["vlc", "VLC media<br>player", 1],
      ["edge", "Microsoft<br>Edge", 1], ["skype", "Skype", 1], ["image", "amact.jpg"],
      ["word", "approveda..."], ["image", "campusbo..."], ["word", "divisionvirg..."],
      ["word", "flowso.rtf"], ["image", "perfectwin..."], ["word", "phentermi..."],
      ["image", "reasonn.png"], ["image", "resolutions..."], ["word", "saturdayjoi..."],
      ["image", "yserver.jpg"]
    ];

    // [level, chevron, icon, label]
    const tree = [
      [1, "r", "npics", "Pictures"], [1, "", "games", "Saved Games"], [1, "r", "lens", "Searches"],
      [1, "", "video", "Videos"], [0, "d", "pc", "This PC"], [1, "r", "cube", "3D Objects"],
      [1, "r", "desk", "Desktop"], [1, "r", "doc", "Documents"], [1, "r", "down", "Downloads"],
      [1, "r", "music", "Music"], [1, "r", "npics", "Pictures"], [1, "r", "video", "Videos"],
      [1, "r", "disk", "Local Disk (C:)"], [0, "r", "libs", "Libraries"], [0, "r", "net", "Network"],
      [0, "d", "panel", "Control Panel"]
    ];

    const groups = [
      ["Today (7)", [
        ["setup", "MicrosoftEdgeWebview2Setup.exe", "5/25/2025 7:23 PM", "Application", "1,619 KB"],
        ["exe", "VolcanoUI.exe", "5/25/2025 7:22 PM", "Application", "17,358 KB"],
        ["exe", "VolcanoUpdater.exe", "5/25/2025 7:22 PM", "Application", "2,159 KB"],
        ["folder", "autoexec", "5/25/2025 7:22 PM", "File folder", ""],
        ["folder", "scripts", "5/25/2025 7:22 PM", "File folder", ""],
        ["folder", "workspace", "5/25/2025 7:22 PM", "File folder", ""],
        ["folder", "bin", "5/25/2025 7:22 PM", "File folder", ""]
      ]],
      ["Earlier this year (1)", [
        ["dll", "WebView2Loader.dll", "3/2/2025 9:42 PM", "Application exten...", "163 KB"]
      ]],
      ["A long time ago (3)", [
        ["pic", "pornring.jpg", "7/13/2022 8:18 AM", "JPG File", "6 KB"],
        ["pic", "appropriatecommunications.png", "12/14/2020 1:52 AM", "PNG File", "5 KB"],
        ["pic", "processingcost.png", "1/19/2018 5:35 PM", "PNG File", "6 KB"]
      ]]
    ];

    document.getElementById("desktop").innerHTML = shortcuts.map(([icon, label, link]) => `
      <div class="flex flex-col items-center text-center leading-[15px] whitespace-nowrap pr-[2px]">
        <div class="relative w-12 h-12 mb-[2px]">
          <svg class="w-12 h-12"><use href="#${icon}" /></svg>
          ${link ? '<svg class="absolute left-0 bottom-px w-3 h-3"><use href="#shortcut" /></svg>' : ""}
        </div>
        ${label}
      </div>`).join("");

    document.getElementById("tree").innerHTML = tree.map(([level, chev, icon, label]) => `
      <div class="h-6 flex items-center whitespace-nowrap tracking-[-0.250px] ${level ? "pl-[22px]" : "pl-[14px]"} ${label === "Downloads" ? "bg-[#cce8ff]" : ""}">
        <span class="w-[10px] mr-2 flex justify-center">
          ${chev === "r" ? '<svg class="w-2 h-[9px] text-gray-400"><use href="#chevR" /></svg>' : ""}
          ${chev === "d" ? '<svg class="w-[10px] h-2 shrink-0 text-gray-700"><use href="#chevD" /></svg>' : ""}
        </span>
        <svg class="w-4 h-4 mr-[5px] shrink-0"><use href="#${icon}" /></svg>${label}
      </div>`).join("");

    document.getElementById("files").innerHTML = groups.map(([title, rows]) => `
      <div class="h-8 flex items-center pl-[10px] pr-2 pt-[2px] text-[14.500px] tracking-[0.050px] text-[#1e3287] whitespace-nowrap">
        <svg class="w-3 h-[10px] mr-[2px] text-gray-400"><use href="#chevD" /></svg>${title}
        <span class="flex-1 h-px bg-[#e2e2e2] ml-2"></span>
      </div>
      ${rows.map(([icon, name, date, type, size]) => `
      <div class="h-[21px] ml-[18px] w-[600px] flex items-center text-[#6d6d6d] whitespace-nowrap ${name === "VolcanoUpdater.exe" ? "bg-[#e5f3ff]" : ""}">
        <svg class="w-4 h-4 ml-1 mr-1 shrink-0"><use href="#${icon}" /></svg>
        <span class="w-[240px] tracking-[-0.340px] text-black">${name}</span>
        <span class="w-[144px] tracking-[-0.480px]">${date}</span>
        <span class="w-[120px]">${type}</span>
        <span class="flex-1 text-right pr-[6px] tracking-[-0.500px]">${size}</span>
      </div>`).join("")}`).join("");
  </script>
</body>

</html>
